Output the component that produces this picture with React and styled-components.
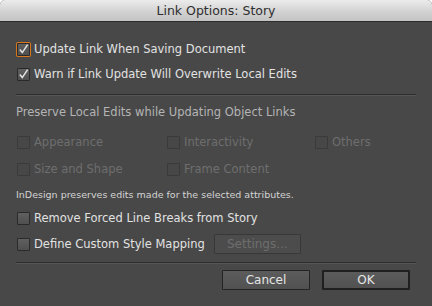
import React from 'react';
import styled, { createGlobalStyle, css } from 'styled-components';

const GlobalStyle = createGlobalStyle`
    html, body {
        margin: 0;
        padding: 0;
        background: #ffffff;
    }
`;

const Dialog = styled.div`
    width: 432px;
    height: 306px;
    display: flex;
    flex-direction: column;
    background: #484848;
    border-radius: 5px 5px 0 0;
    overflow: hidden;
    font-family: "DejaVu Sans", "Liberation Sans", sans-serif;
    font-size: 11.5px;
    color: #e2e2e2;
`;

//TITLE BAR
const TitleBar = styled.div`
    height: 21px;
    display: flex;
    align-items: center;
    justify-content: center;
    background: linear-gradient(#ececec, #d0d0d0 60%, #c4c4c4);
    border-bottom: 1px solid #2c2c2c;
    color: #2e2e2e;
    font-size: 12.5px;
`;

const Body = styled.div`
    display: flex;
    flex-direction: column;
    padding: 17px 16px 0 16px;
`;

//CHECKBOX ROWS
const Row = styled.label`
    height: 20px;
    display: flex;
    align-items: center;
    gap: 4px;
    margin-top: ${p => p.$top || 0}px;
    color: ${p => (p.$disabled ? '#6e6e6e' : '#e2e2e2')};
`;

const Box = styled.span`
    width: 11px;
    height: 11px;
    flex-shrink: 0;
    display: flex;
    align-items: center;
    justify-content: center;
    margin-left: 1px;
    border: 1px solid #2a2a2a;
    border-radius: 1px;
    background: linear-gradient(#606060, #4f4f4f);
    ${p => p.$focused && css`
        box-shadow: 0 0 0 1px #d8771e;
    `}
    ${p => p.$disabled && css`
        border-color: #3a3a3a;
        background: #474747;
    `}
`;

const Tick = () => (
    <svg width="11" height="11" viewBox="0 0 11 11">
        <path d="M1.8 5.6 L4.3 8.6 L9.6 0.6" fill="none" stroke="#e4e4e4" strokeWidth="1.5" />
    </svg>
);

const CheckRow = ({ label, checked, focused, disabled, top }) => (
    <Row $top={top} $disabled={disabled}>
        <Box $focused={focused} $disabled={disabled}>{checked && <Tick />}</Box>
        {label}
    </Row>
);

const Divider = styled.div`
    height: 1px;
    background: #2e2e2e;
    border-bottom: 1px solid #565656;
    margin-top: ${p => p.$top}px;
`;

const Heading = styled.div`
    height: 16px;
    display: flex;
    align-items: center;
    margin-top: 8px;
    color: #b4b4b4;
`;

const OptionGrid = styled.div`
    display: grid;
    grid-template-columns: 150px 148px auto;
    row-gap: 7px;
    margin-top: 12px;
`;

const Note = styled.div`
    height: 16px;
    display: flex;
    align-items: center;
    margin-top: 7px;
    font-size: 9.5px;
    color: #d4d4d4;
`;

const MappingRow = styled.div`
    display: flex;
    align-items: center;
    gap: 9px;
    margin-top: 6px;
`;

//BUTTONS
const Button = styled.button`
    width: ${p => p.$width || 88}px;
    height: 20px;
    padding: 0;
    font-family: inherit;
    font-size: 12px;
    color: #e6e6e6;
    background: linear-gradient(#5c5c5c, #515151);
    border: 1px solid #232323;
    border-radius: 1px;
    ${p => p.$default && css`
        border: 2px solid #1f1f1f;
    `}
    ${p => p.disabled && css`
        color: #6e6e6e;
        background: #4c4c4c;
        border-color: #383838;
    `}
`;

const ButtonBar = styled.div`
    display: flex;
    justify-content: flex-end;
    gap: 12px;
    margin-top: 6px;
    padding-right: 6px;
`;

const App = () => {
    return <Dialog>
        <GlobalStyle />
        <TitleBar>Link Options: Story</TitleBar>
        <Body>
            <CheckRow label="Update Link When Saving Document" checked focused />
            <CheckRow label="Warn if Link Update Will Overwrite Local Edits" checked top={5} />

            <Divider $top={10} />

            <Heading>Preserve Local Edits while Updating Object Links</Heading>
            <OptionGrid>
                <CheckRow label="Appearance" disabled />
                <CheckRow label="Interactivity" disabled />
                <CheckRow label="Others" disabled />
                <CheckRow label="Size and Shape" disabled />
                <CheckRow label="Frame Content" disabled />
            </OptionGrid>
            <Note>InDesign preserves edits made for the selected attributes.</Note>

            <CheckRow label="Remove Forced Line Breaks from Story" top={6} />
            <MappingRow>
                <CheckRow label="Define Custom Style Mapping" />
                <Button disabled $width={87}>Settings...</Button>
            </MappingRow>

            <Divider $top={8} />

            <ButtonBar>
                <Button>Cancel</Button>
                <Button $default>OK</Button>
            </ButtonBar>
        </Body>
    </Dialog>
}

export default App;
